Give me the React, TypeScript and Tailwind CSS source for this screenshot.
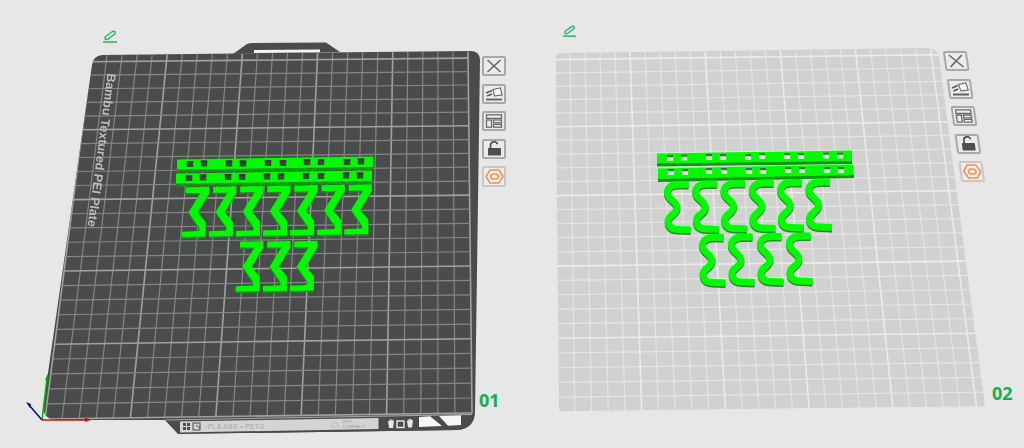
import type { ReactNode } from "react";

type Pt = [number, number];

interface PlateGeom {
  tl: Pt;
  tr: Pt;
  br: Pt;
  bl: Pt;
  cols: number;
  rows: number;
}

const lerp = (a: Pt, b: Pt, t: number): Pt => [a[0] + (b[0] - a[0]) * t, a[1] + (b[1] - a[1]) * t];

// rows get a bit wider towards the viewer
const ease = (t: number) => 0.94 * t + 0.06 * t * t;

function GridLines({ g, minor, major }: { g: PlateGeom; minor: string; major: string }) {
  const lines: ReactNode[] = [];
  for (let i = 0; i <= Math.ceil(g.cols); i++) {
    const u = i / g.cols;
    const a = lerp(g.tl, g.tr, u);
    const b = lerp(g.bl, g.br, u);
    const big = i % 5 === 0;
    lines.push(
      <line key={`c${i}`} x1={a[0]} y1={a[1]} x2={b[0]} y2={b[1]} stroke={big ? major : minor} strokeWidth={big ? 1.6 : 1.2} />,
    );
  }
  for (let j = 0; j <= g.rows; j++) {
    const v = ease((j + 0.5) / (g.rows + 0.5));
    const a = lerp(g.tl, g.bl, v);
    const b = lerp(g.tr, g.br, v);
    const big = j % 5 === 0;
    lines.push(
      <line key={`r${j}`} x1={a[0]} y1={a[1]} x2={b[0]} y2={b[1]} stroke={big ? major : minor} strokeWidth={big ? 1.6 : 1.2} />,
    );
  }
  return <>{lines}</>;
}

function Bar({ pts, holes, hole, holeTop }: { pts: Pt[]; holes: Pt[]; hole: string; holeTop: string }) {
  const [a, b, c, d] = pts;
  const poly = (list: Pt[]) => list.map((p) => p.join(",")).join(" ");
  return (
    <g>
      <polygon points={poly([[d[0], d[1] - 1], [c[0], c[1] - 1], [c[0], c[1] + 3], [d[0], d[1] + 3]])} fill="#009c00" />
      <polygon points={poly([a, b, c, d])} fill="#00fb00" />
      {holes.map(([x, y], i) => (
        <g key={i}>
          <rect x={x - 3.2} y={y - 3} width={6.4} height={6} fill={hole} />
          <rect x={x - 3.2} y={y - 3} width={6.4} height={2.2} fill={holeTop} />
        </g>
      ))}
    </g>
  );
}

function Clips({ offsets, d, width }: { offsets: Pt[]; d: string; width: number }) {
  return (
    <g fill="none" strokeLinecap="butt">
      {offsets.map(([x, y], i) => (
        <g key={i} transform={`translate(${x} ${y})`}>
          <path d={d} transform="translate(0 1.7)" stroke="#00a000" strokeWidth={width} />
          <path d={d} stroke="#00fa00" strokeWidth={width} />
        </g>
      ))}
    </g>
  );
}

function Hooks({ offsets, points }: { offsets: Pt[]; points: string }) {
  return (
    <g>
      {offsets.map(([x, y], i) => (
        <g key={i} transform={`translate(${x} ${y})`}>
          <polygon points={points} transform="translate(0 1.7)" fill="#00a000" />
          <polygon points={points} fill="#00fa00" />
        </g>
      ))}
    </g>
  );
}

const range = (n: number, x0: number, y0: number, dx: number, dy: number): Pt[] =>
  Array.from({ length: n }, (_, i) => [x0 + dx * i, y0 + dy * i] as Pt);

const LEFT_GEOM: PlateGeom = { tl: [92, 55], tr: [468, 51.5], br: [472, 413], bl: [45, 419], cols: 25, rows: 25 };
const RIGHT_GEOM: PlateGeom = { tl: [555, 53], tr: [938, 48], br: [985, 407], bl: [558, 412], cols: 25.5, rows: 25 };

const LEFT_OUTLINE =
  "M102 55 L470 51 Q480 51 480 60 L475 412 Q474 429 457 430 L178 434 L165 420 L58 420 Q44 420 43 408 L92 65 Q93 56 102 55 Z";
const RIGHT_OUTLINE = "M563 53 L926 48 Q938 48 939 57 L985 407 L564 412 Q559 412 559 408 L555 60 Q555 53 563 53 Z";

const HOOK_POINTS =
  "186,187.3 209.3,186.7 209.3,193 197.5,212.3 205.7,222 205.7,236.5 181.7,237 181.7,231.7 199.3,231 199.3,228 188.5,212.3 200.5,192.9 186,193.1";

function LeftPlate() {
  return (
    <svg className="block h-[448px] w-[512px] blur-[0.4px]" viewBox="0 0 512 448">
      <defs>
        <clipPath id="left-plate">
          <path d={LEFT_OUTLINE} />
        </clipPath>
      </defs>
      {/* handle */}
      <path d="M233 54 L247 44 Q249 43 252 43 L326 42.5 L340 52 Z" fill="#4a4c4b" />
      <path d="M254 50 L320 49.5 L320 52.5 L254 53 Z" fill="#f4f4f4" />
      <path d={LEFT_OUTLINE} fill="#4a4c4b" />
      <g clipPath="url(#left-plate)">
        <GridLines g={LEFT_GEOM} minor="#858785" major="#a0a2a0" />
        <path d="M165 420 L178 434 L480 431 L480 414.5 Z" fill="#4a4c4b" />
        <path d="M165 420 L472 414.5" stroke="#a8aaa8" strokeWidth={1} />
      </g>
      {/* plate name */}
      <text
        transform="translate(107.5 73) rotate(97.4)"
        fontFamily="'Liberation Sans', sans-serif"
        fontSize={12.5}
        fontWeight={700}
        fill="#bcbebc"
      >
        Bambu Textured PEI Plate
      </text>
      {/* label strip along the front edge */}
      <path d="M180 421.5 L378.5 418 L378.5 429 L180 432.5 Z" fill="#d2d5d3" />
      <g fill="#4a4c4b">
        <rect x={183} y={423} width={3} height={3} />
        <rect x={187} y={423} width={3} height={3} />
        <rect x={183} y={427} width={3} height={3} />
        <rect x={187} y={427} width={3} height={3} />
      </g>
      <rect x={193} y={423} width={7} height={7} fill="none" stroke="#4a4c4b" strokeWidth={1} />
      <path d="M196 425 L200 428" stroke="#4a4c4b" />
      <text x={208} y={428.5} fontFamily="'Liberation Sans', sans-serif" fontSize={6.5} fill="#a2a4a3" letterSpacing={0.5}>
        PLA ABS • PETG
      </text>
      <path d="M330 427 L335 421 L339 427 Z" fill="none" stroke="#b5b7b6" strokeWidth={0.7} />
      <text x={343} y={423} fontFamily="'Liberation Sans', sans-serif" fontSize={4} fill="#8f918f">
        HOT
      </text>
      <text x={343} y={427.5} fontFamily="'Liberation Sans', sans-serif" fontSize={4} fill="#8f918f" letterSpacing={0.4}>
        COMPACT
      </text>
      <path d="M388 421 L394 420.5 L393 428 L389 428 Z M389.5 419.5 h3 v1 h-3 Z" fill="#e8e8e8" />
      <rect x={397} y={421} width={7} height={6.5} fill="none" stroke="#e8e8e8" strokeWidth={1.4} />
      <path d="M407 420.5 L413 420 L412 427.5 L408 427.5 Z M408.5 419 h3 v1 h-3 Z" fill="#e8e8e8" />
      <path d="M419 417 L430 416.3 L442 426 L419 427 Z" fill="#f7f7f7" />
      <path d="M439 416 L461 415.3 L461 425 L448 425.8 Z" fill="#f7f7f7" />

      <Bar
        pts={[[177, 159.5], [373, 156.5], [373, 167], [177, 169.5]]}
        hole="#3f4541"
        holeTop="#2f3a32"
        holes={[[190, 164], [204, 163.5], [229, 163.5], [243, 163.5], [268, 163], [283, 163], [307, 162], [321, 162], [347, 162], [361, 161.5]]}
      />
      <Bar
        pts={[[176, 173.5], [372, 170.5], [372, 181], [176, 183.5]]}
        hole="#3f4541"
        holeTop="#2f3a32"
        holes={[[189, 178], [203, 177.5], [228, 177], [242, 177], [267, 176.5], [281, 176.5], [306, 176], [321, 176], [346, 175.5], [360, 175.5]]}
      />
      <Hooks offsets={[...range(7, 0, 0, 27.1, -0.4), ...range(3, 54, 54.5, 27.1, -0.2)]} points={HOOK_POINTS} />
      {/* axes */}
      <g fill="none" strokeWidth={1.5}>
        <path d="M42 420 L47 378" stroke="#00b800" />
        <path d="M42 420 L29 405" stroke="#0a0a78" />
        <path d="M42 420 L86 420" stroke="#d01010" />
      </g>
      <path d="M45 380 L49 380 L47.5 374 Z" fill="#00a000" />
      <path d="M26 402 L31 404 L30 408 Z" fill="#0a0a78" />
      <path d="M85 417.5 L91 420 L85 422 Z" fill="#d01010" />
    </svg>
  );
}

function RightPlate() {
  return (
    <svg className="block h-[448px] w-[512px] blur-[0.4px]" viewBox="512 0 512 448">
      <defs>
        <clipPath id="right-plate">
          <path d={RIGHT_OUTLINE} />
        </clipPath>
      </defs>
      <path d={RIGHT_OUTLINE} fill="#d1d1d1" />
      <g clipPath="url(#right-plate)">
        <GridLines g={RIGHT_GEOM} minor="#e4e4e4" major="#ebebeb" />
      </g>
      <Bar
        pts={[[657, 153.5], [852, 150.5], [852, 161], [657, 163.5]]}
        hole="#d4e4d4"
        holeTop="#0b8a14"
        holes={[[670, 158], [684, 157.5], [709, 157], [723, 157], [748, 157], [762, 156], [787, 156], [801, 156], [826, 155.5], [840, 155.5]]}
      />
      <Bar
        pts={[[658, 168.5], [853, 164.5], [854, 175], [658, 179]]}
        hole="#d4e4d4"
        holeTop="#0b8a14"
        holes={[[671, 172], [685, 172], [709, 171], [724, 171], [749, 171], [763, 171], [788, 170], [802, 170], [827, 170], [841, 170]]}
      />
      <Clips
        offsets={[...range(6, 0, 0, 28.3, -0.5), ...range(4, 35, 53, 29, -0.5)]}
        width={6.8}
        d="M688.5 184.5 L678 184.5 C670 184.5 666.5 189 667.5 194 C668.5 200 677 201 677 208 C677 214 668 215 668 221 C668 227 672 229.5 678 229.5 L690.5 229.8"
      />
    </svg>
  );
}

function PencilIcon({ className }: { className: string }) {
  return (
    <svg className={className} viewBox="0 0 16 14" fill="none" stroke="#22bb66" strokeWidth={1.4}>
      <path d="M3.5 9.5 L3 7 L10.5 1.5 Q12 0.8 13 2 Q13.6 3.4 12.5 4.2 L5.5 9.4 Z" strokeLinejoin="round" />
      <path d="M1 12 H15" strokeWidth={1.6} />
    </svg>
  );
}

function ToolButton({ children, accent }: { children: ReactNode; accent?: boolean }) {
  return (
    <div
      className={
        accent
          ? "flex h-[21px] w-[24px] items-center justify-center rounded-[2px] border-2 border-[#c8c8c8] bg-[#ededed]"
          : "flex h-[20px] w-[24px] items-center justify-center rounded-[2px] border-2 border-[#a8a8a8] bg-[#ebebeb]"
      }
    >
      {children}
    </div>
  );
}

function ToolIcons() {
  return (
    <>
      <ToolButton>
        <svg className="h-[14px] w-[18px]" viewBox="0 0 18 14" stroke="#6a6a6a" strokeWidth={1.7}>
          <path d="M2.5 1 L15.5 13 M15.5 1 L2.5 13" />
        </svg>
      </ToolButton>
      <ToolButton>
        <svg className="h-[14px] w-[18px]" viewBox="0 0 18 14" fill="none" stroke="#5f5f5f" strokeWidth={1.1}>
          <path d="M8 2.5 L15.5 0.8 L17 8 L9.5 9 Z" fill="#f4f4f4" />
          <path d="M1 6 L7 3.5 M2 9 L7 7" strokeWidth={1.8} />
          <path d="M1 12.5 H17" strokeWidth={1.8} />
        </svg>
      </ToolButton>
      <ToolButton>
        <svg className="h-[14px] w-[18px]" viewBox="0 0 18 14" fill="none" stroke="#6a6a6a" strokeWidth={1.3}>
          <rect x={1.5} y={0.8} width={15} height={3.6} />
          <rect x={1.5} y={6} width={5} height={7.2} />
          <rect x={8.5} y={6} width={8} height={2.8} />
          <rect x={8.5} y={10.4} width={8} height={2.8} />
        </svg>
      </ToolButton>
      <ToolButton>
        <svg className="h-[15px] w-[15px]" viewBox="0 0 15 15" fill="none">
          <path d="M3.5 7 V4.5 A3.6 3.6 0 0 1 10.5 3.2" stroke="#4e4e4e" strokeWidth={1.7} />
          <rect x={1} y={7} width={13} height={7.5} rx={0.8} fill="#4e4e4e" />
        </svg>
      </ToolButton>
      <ToolButton accent>
        <svg className="h-[15px] w-[19px]" viewBox="0 0 19 15" fill="none" stroke="#f0934a" strokeWidth={1.5}>
          <path d="M5 1 H14 L18 7.5 L14 14 H5 L1 7.5 Z" />
          <ellipse cx={9.5} cy={7.5} rx={3.8} ry={2.6} />
        </svg>
      </ToolButton>
    </>
  );
}

export default function App() {
  return (
    <div className="flex h-[448px] w-[1024px] overflow-hidden bg-[#e7e7e7] font-['Open_Sans',sans-serif]">
      <section className="relative h-[448px] w-[512px]">
        <LeftPlate />
        <PencilIcon className="absolute left-[102px] top-[30px] h-[14px] w-[16px]" />
        <div className="absolute left-[482px] top-[56px] flex flex-col gap-[7.5px]">
          <ToolIcons />
        </div>
        <span className="absolute left-[479px] top-[388px] text-[18px] font-bold leading-[24px] text-[#10b04e]">01</span>
      </section>
      <section className="relative h-[448px] w-[512px]">
        <RightPlate />
        <PencilIcon className="absolute left-[50px] top-[25px] h-[13px] w-[15px]" />
        <div className="absolute left-[440px] top-[51px] flex skew-x-[8deg] flex-col gap-[7.5px]">
          <ToolIcons />
        </div>
        <span className="absolute left-[480px] top-[381px] text-[18px] font-bold leading-[24px] text-[#10b04e]">02</span>
      </section>
    </div>
  );
}
